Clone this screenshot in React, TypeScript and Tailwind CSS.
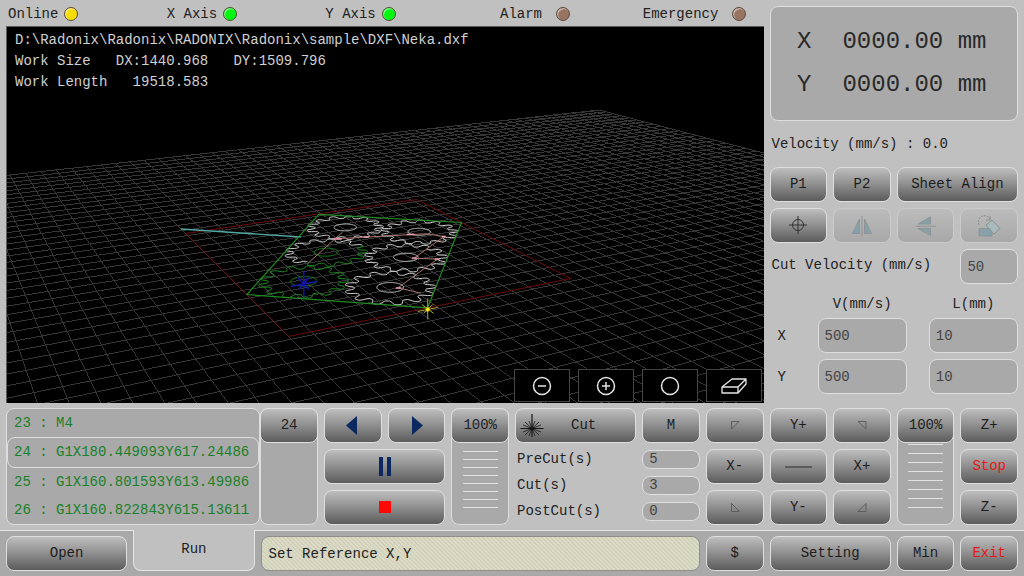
import type { ReactNode } from 'react'

const BTN =
  'flex h-[35px] w-full min-w-0 items-center justify-center rounded-lg border border-[#dedede] bg-linear-to-b from-[#bebebe] via-[#8e8e8e] to-[#5c5c5c] pb-0.5 text-[#1c1c1c]'
const BTN_OFF =
  'flex h-[35px] w-full items-center justify-center rounded-lg border border-[#cbcbcb] bg-linear-to-b from-[#bcbcbc] to-[#a8a8a8]'
const FIELD =
  'w-full min-w-0 rounded-lg border border-[#dedede] bg-[#a9a9a9] px-1.5 text-[#444444] outline-none'
const TOOL =
  'flex h-[33px] w-14 items-center justify-center border border-[#444444] bg-black text-[#e4e4e4]'

// ---------- 3D view ----------

const DX = 1440.968
const DY = 1509.796

type Point = [number, number]

// work plane (mm) to view coordinates
function project(x: number, y: number): Point {
  const u = x / DX
  const v = y / DY
  const w = 1 + 0.1622 * u + 0.3289 * v
  return [
    (374.5 * u - 42.2 * v + 288) / w,
    (-12.9 * u - 26.4 * v + 336) / w,
  ]
}

function toPath(points: Point[]) {
  return (
    'M' + points.map((p) => p[0].toFixed(1) + ' ' + p[1].toFixed(1)).join('L')
  )
}

function gridPath() {
  let d = ''
  for (let x = -2000; x <= 4300; x += 100) {
    d += toPath([project(x, -2000), project(x, 3270)])
  }
  for (let y = -2030; y <= 3270; y += 100) {
    d += toPath([project(-1900, y), project(4300, y)])
  }
  return d
}

// the sheet lies rotated inside the DX x DY box, a runs along its long side
function sheet(a: number, b: number): Point {
  return project(
    (0.455 + 0.545 * a - 0.455 * b) * DX,
    (0.655 * a + 0.34 * b) * DY
  )
}

function ring(
  row: number,
  col: number,
  radius: (t: number) => number,
  from = 0,
  to = 360
) {
  const points: Point[] = []
  for (let deg = from; deg <= to; deg += 2) {
    const t = (deg * Math.PI) / 180
    const r = radius(t)
    points.push(
      sheet(
        (row + 0.5) / 3 + (r * Math.cos(t)) / 1268,
        (col + 0.5) / 2 + (r * Math.sin(t)) / 834
      )
    )
  }
  return toPath(points)
}

const tooth = (t: number) => 190 + 24 * Math.tanh(2 * Math.sin(13 * t))
const hub = () => 62

const Scene = () => (
  <svg
    className="absolute inset-0 h-full w-full"
    viewBox="6 26 757 377"
    preserveAspectRatio="xMidYMid slice"
    fill="none"
    aria-hidden="true"
  >
    <path d={gridPath()} stroke="#363636" shapeRendering="crispEdges" />
    <path
      d={toPath([
        project(0, 0),
        project(DX, 0),
        project(DX, DY),
        project(0, DY),
        project(0, 0),
      ])}
      stroke="#6e0a0a"
    />
    <path d="M180 228.5L300 236.5" stroke="#4fa9a4" strokeWidth="1.3" />
    <g stroke="#cccccc">
      <path d={ring(0, 0, tooth)} />
      <path d={ring(1, 0, tooth)} />
      <path d={ring(2, 0, tooth)} />
      <path d={ring(2, 1, tooth)} />
      <path d={ring(1, 1, tooth, -50, 160)} />
      <path d={ring(0, 0, hub)} />
      <path d={ring(1, 0, hub)} />
      <path d={ring(2, 0, hub)} />
      <path d={ring(2, 1, hub)} />
    </g>
    <g stroke="#1f8a22">
      <path d={ring(1, 1, tooth, 160, 310)} />
      <path d={ring(1, 1, hub)} />
      <path d={ring(0, 1, tooth)} />
      <path d={ring(0, 1, hub)} />
      <path
        d={toPath([
          sheet(0, 0),
          sheet(1, 0),
          sheet(1, 1),
          sheet(0, 1),
          sheet(0, 0),
        ])}
        strokeWidth="1.2"
      />
    </g>
    <path
      d="M307.7 262.3L341.7 231.7M335 238.3L425 233.3L443.3 236L413.3 257.7L436.7 258.7L397.3 287.3L420 292.7"
      stroke="#a8746c"
    />
    <path
      d="M333 238.5h8M363 236.5h5M406 234h8M441 236h4M411 257.5h5M434 258.5h5M395 287.5h5"
      stroke="#f0a0b0"
      strokeWidth="1.5"
    />
    <path
      d="M303 270V296M290 286L316 281M297 277L308 289M308 277L298 289"
      stroke="#1414b4"
      strokeWidth="1.4"
    />
    <path
      d="M427 298V319M417 311L437 307M421 304L433 313M432 304L423 313"
      stroke="#a8a83c"
    />
    <path d="M425 309h4M427 307v4" stroke="#ffee00" strokeWidth="2" />
  </svg>
)

// ---------- parts ----------

const Led = ({ label, gap, color }: { label: string; gap: string; color: string }) => (
  <div className={'flex items-center ' + gap}>
    <span>{label}</span>
    <span
      className={
        'size-3.5 rounded-full border border-[#5a4a3a] shadow-[inset_1px_1px_1px_rgba(255,255,255,0.6)] ' +
        color
      }
    ></span>
  </div>
)

const Override = ({ value, lines, gap }: { value: string; lines: number; gap: string }) => (
  <div className="flex flex-col rounded-lg border border-[#dedede] bg-[#a9a9a9]">
    <button
      type="button"
      className="-mx-px -mt-px flex h-[35px] items-center justify-center rounded-lg border border-[#dedede] bg-linear-to-b from-[#bebebe] via-[#8e8e8e] to-[#5c5c5c] pb-0.5"
    >
      {value}
    </button>
    <div className={'flex flex-1 flex-col items-center justify-end pb-4 ' + gap}>
      {Array.from({ length: lines }, (_, i) => (
        <div key={i} className="h-px w-[35px] bg-[#e2e2e2]"></div>
      ))}
    </div>
  </div>
)

const Icon = ({ children, size = 'size-6' }: { children: ReactNode; size?: string }) => (
  <svg className={size} viewBox="0 0 24 24" fill="none" stroke="currentColor" aria-hidden="true">
    {children}
  </svg>
)

const Corner = ({ d, label }: { d: string; label: string }) => (
  <button type="button" className={BTN} aria-label={label}>
    <Icon>
      <path d={d} stroke="#5e5e5e" />
    </Icon>
  </button>
)

const code = [
  '23 : M4',
  '24 : G1X180.449093Y617.24486',
  '25 : G1X160.801593Y613.49986',
  '26 : G1X160.822843Y615.13611',
]

const timers = [
  { id: 'precut', label: 'PreCut(s)', value: '5' },
  { id: 'cut', label: 'Cut(s)', value: '3' },
  { id: 'postcut', label: 'PostCut(s)', value: '0' },
]

const App = () => {
  return (
    <div className="flex min-h-screen flex-col bg-[#c0c0c0] font-['Liberation_Mono',monospace] text-[14px] leading-5 text-[#222222]">
      <div className="grid flex-1 grid-cols-16 gap-1.5 px-1.5">
        <div className="col-span-12 flex flex-col">
          <div className="grid h-[26px] grid-cols-[159fr_159fr_175fr_143fr_121fr] items-center pt-0.5 pl-0.5">
            <Led label="Online" gap="gap-1.5" color="bg-[#f8dc08]" />
            <Led label="X Axis" gap="gap-1.5" color="bg-[#00f810]" />
            <Led label="Y Axis" gap="gap-1.5" color="bg-[#00f810]" />
            <Led label="Alarm" gap="gap-3.5" color="bg-[#987460]" />
            <Led label="Emergency" gap="gap-3.5" color="bg-[#987460]" />
          </div>

          <div className="relative flex-1 overflow-hidden border-t border-l border-[#5c5c5c] bg-black">
            <Scene />
            <div className="relative pt-[3px] pl-2 leading-[21px] whitespace-pre text-[#d0d0d0]">
              <p>D:\Radonix\Radonix\RADONIX\Radonix\sample\DXF\Neka.dxf</p>
              <p>Work Size   DX:1440.968   DY:1509.796</p>
              <p>Work Length   19518.583</p>
            </div>
            <div className="absolute right-0.5 bottom-px flex gap-2">
              <button type="button" className={TOOL} aria-label="Zoom out">
                <Icon>
                  <circle cx="12" cy="12" r="8.5" strokeWidth="1.5" />
                  <path d="M8 12h8" strokeWidth="1.5" />
                </Icon>
              </button>
              <button type="button" className={TOOL} aria-label="Zoom in">
                <Icon>
                  <circle cx="12" cy="12" r="8.5" strokeWidth="1.5" />
                  <path d="M8 12h8M12 8v8" strokeWidth="1.5" />
                </Icon>
              </button>
              <button type="button" className={TOOL} aria-label="Fit">
                <Icon>
                  <circle cx="12" cy="12" r="8.5" strokeWidth="1.5" />
                </Icon>
              </button>
              <button type="button" className={TOOL} aria-label="3D view">
                <svg className="h-5 w-7" viewBox="0 0 28 20" fill="none" stroke="currentColor" strokeWidth="1.3" strokeLinejoin="round">
                  <path d="M2 11L12 3H26L18 11ZM2 11V17H18V11M18 17L26 8V3" />
                </svg>
              </button>
            </div>
          </div>
        </div>

        <div className="col-span-4 flex flex-col pt-1.5">
          <div className="flex h-[115px] flex-col items-center justify-center gap-[11px] rounded-lg border border-[#dedede] bg-[#a9a9a9] pr-1 text-2xl whitespace-pre text-[#2a2a2a]">
            <div className="flex h-8 items-center gap-[31px]">
              <span>X</span>
              <span>0000.00 mm</span>
            </div>
            <div className="flex h-8 items-center gap-[31px]">
              <span>Y</span>
              <span>0000.00 mm</span>
            </div>
          </div>

          <div className="flex h-[46px] items-center pl-0.5">
            Velocity (mm/s) : 0.0
          </div>

          <div className="grid grid-cols-4 gap-1.5">
            <button type="button" className={BTN}>P1</button>
            <button type="button" className={BTN}>P2</button>
            <div className="col-span-2">
              <button type="button" className={BTN}>Sheet Align</button>
            </div>
            <button type="button" className={BTN} aria-label="Set origin">
              <Icon>
                <circle cx="12" cy="12" r="5.5" stroke="#333333" />
                <path d="M3 12h18M12 3v18" stroke="#333333" />
              </Icon>
            </button>
            <button type="button" className={BTN_OFF} disabled aria-label="Mirror horizontally">
              <Icon>
                <path d="M9.5 5V19.5H2.5ZM14.5 5V19.5H21.5Z" fill="#86a2a8" stroke="#8e9496" />
                <path d="M12 2V22" stroke="#929292" />
              </Icon>
            </button>
            <button type="button" className={BTN_OFF} disabled aria-label="Mirror vertically">
              <Icon>
                <path d="M16.5 10H4L16.5 3ZM16.5 14.5H4L16.5 21.5Z" fill="#86a2a8" stroke="#8e9496" />
                <path d="M2 12.2H22" stroke="#929292" />
              </Icon>
            </button>
            <button type="button" className={BTN_OFF} disabled aria-label="Rotate">
              <Icon>
                <path d="M2 14.5H15V22H2Z" fill="#86a2a8" stroke="#8e9496" />
                <path d="M9 11L15 6L23 14.5L17 20Z" fill="#a9babd" stroke="#888e90" />
                <path d="M2 11A6 6 0 1 1 13 5" stroke="#8c8c8c" strokeDasharray="2 1" />
                <path d="M13 2V6H9" stroke="#8c8c8c" />
              </Icon>
            </button>
            <label htmlFor="cut-velocity" className="col-span-3 pt-1.5 pl-0.5">
              Cut Velocity (mm/s)
            </label>
            <input id="cut-velocity" defaultValue="50" className={'h-[35px] ' + FIELD} />
          </div>

          <div className="grid grid-cols-[26px_1fr_1fr] items-center gap-x-[22px] gap-y-1.5">
            <span></span>
            <span className="flex h-7 items-end justify-center leading-4">V(mm/s)</span>
            <span className="flex h-7 items-end justify-center leading-4">L(mm)</span>
            <span className="pl-2">X</span>
            <input aria-label="X velocity" defaultValue="500" className={'h-[35px] ' + FIELD} />
            <input aria-label="X length" defaultValue="10" className={'h-[35px] ' + FIELD} />
            <span className="pl-2">Y</span>
            <input aria-label="Y velocity" defaultValue="500" className={'h-[35px] ' + FIELD} />
            <input aria-label="Y length" defaultValue="10" className={'h-[35px] ' + FIELD} />
          </div>
          <div className="h-[9px]"></div>
        </div>
      </div>

      <div className="grid grid-cols-16 gap-1.5 px-1.5 py-[5px]">
        <div className="col-span-5 flex h-[117px]">
          <div className="flex min-w-0 flex-1 flex-col overflow-hidden rounded-lg border border-[#dedede] bg-[#a9a9a9] whitespace-pre text-[#1a8028]">
            {code.map((line, i) => (
              <div
                key={line}
                className={
                  i === 1
                    ? 'flex flex-1 items-center rounded-lg border border-[#dedede] pl-1.5'
                    : 'flex flex-1 items-center pl-[7px]'
                }
              >
                {line}
              </div>
            ))}
          </div>
          <div className="grid w-[58px]">
            <Override value="24" lines={0} gap="gap-0" />
          </div>
        </div>

        <div className="col-span-2 grid grid-cols-2 gap-1.5">
          <button type="button" className={BTN} aria-label="Previous">
            <Icon>
              <path d="M16 3V22L5 12.5Z" fill="#0b2860" stroke="none" />
            </Icon>
          </button>
          <button type="button" className={BTN} aria-label="Next">
            <Icon>
              <path d="M7 3V22L18 12.5Z" fill="#0b2860" stroke="none" />
            </Icon>
          </button>
          <div className="col-span-2">
            <button type="button" className={BTN} aria-label="Pause">
              <Icon>
                <path d="M6 3h4v19H6ZM14 3h4v19h-4Z" fill="#0b2860" stroke="none" />
              </Icon>
            </button>
          </div>
          <div className="col-span-2">
            <button type="button" className={BTN} aria-label="Stop program">
              <Icon>
                <path d="M6 6h12v12H6Z" fill="#ff0808" stroke="none" />
              </Icon>
            </button>
          </div>
        </div>

        <Override value="100%" lines={8} gap="gap-[7px]" />

        <div className="col-span-3 flex flex-col gap-1.5">
          <div className="grid grid-cols-3 gap-1.5">
            <div className="col-span-2">
              <button type="button" className={BTN}>
                <svg className="mt-0.5 ml-1 size-6" viewBox="0 0 24 24" stroke="#151515" aria-hidden="true">
                  <path d="M12 0V23M0.5 14.5H23.5" strokeWidth="1.2" />
                  <path d="M5 8L19 21M19 8L5 21M3 11L21 18M21 11L3 18M9 7L15 22M15 7L9 22" strokeWidth="0.8" />
                  <circle cx="12" cy="14.5" r="1.5" fill="#151515" />
                </svg>
                <span className="flex-1 pr-3 text-center">Cut</span>
              </button>
            </div>
            <button type="button" className={BTN}>M</button>
          </div>
          <div className="flex flex-col gap-[7px]">
            {timers.map((t) => (
              <div key={t.id} className="grid h-[19px] grid-cols-3 items-center gap-1.5">
                <label htmlFor={t.id} className="col-span-2 pl-0.5">
                  {t.label}
                </label>
                <input id={t.id} defaultValue={t.value} className={'h-[19px] ' + FIELD} />
              </div>
            ))}
          </div>
        </div>

        <div className="col-span-3 grid grid-cols-3 gap-1.5">
          <Corner label="X- Y+" d="M8.5 8.5H16L8.5 16Z" />
          <button type="button" className={BTN}>Y+</button>
          <Corner label="X+ Y+" d="M8 8.5H16V16Z" />
          <button type="button" className={BTN}>X-</button>
          <button type="button" className={BTN} aria-label="Jog mode">
            <span className="mt-0.5 h-0.5 w-[27px] bg-[#5c5c5c]"></span>
          </button>
          <button type="button" className={BTN}>X+</button>
          <Corner label="X- Y-" d="M8.5 8.5V16.5H16.5Z" />
          <button type="button" className={BTN}>Y-</button>
          <Corner label="X+ Y-" d="M16 8.5V16.5H8Z" />
        </div>

        <Override value="100%" lines={8} gap="gap-2" />

        <div className="flex flex-col gap-1.5">
          <button type="button" className={BTN}>Z+</button>
          <button type="button" className={BTN}>
            <span className="text-[#e81818]">Stop</span>
          </button>
          <button type="button" className={BTN}>Z-</button>
        </div>
      </div>

      <div className="grid grid-cols-16 gap-1.5 border-t border-[#e6e6e6] bg-[#a9a9a9] px-1.5 py-[5px]">
        <div className="col-span-2">
          <button type="button" className={BTN}>Open</button>
        </div>
        <button
          type="button"
          className="col-span-2 -mt-1.5 flex h-[41px] items-center justify-center rounded-b-lg border-x border-b border-[#e6e6e6] bg-[#c0c0c0] pb-0.5"
        >
          Run
        </button>
        <div className="col-span-7 flex h-[35px] items-center rounded-lg border border-[#8e8e8a] bg-[repeating-linear-gradient(45deg,#dcdcc6_0px,#dcdcc6_1px,#cacab6_2px,#dcdcc6_3px)] pl-[7px]">
          Set Reference X,Y
        </div>
        <button type="button" className={BTN}>$</button>
        <div className="col-span-2">
          <button type="button" className={BTN}>Setting</button>
        </div>
        <button type="button" className={BTN}>Min</button>
        <button type="button" className={BTN}>
          <span className="text-[#e81818]">Exit</span>
        </button>
      </div>
    </div>
  )
}

export default App
